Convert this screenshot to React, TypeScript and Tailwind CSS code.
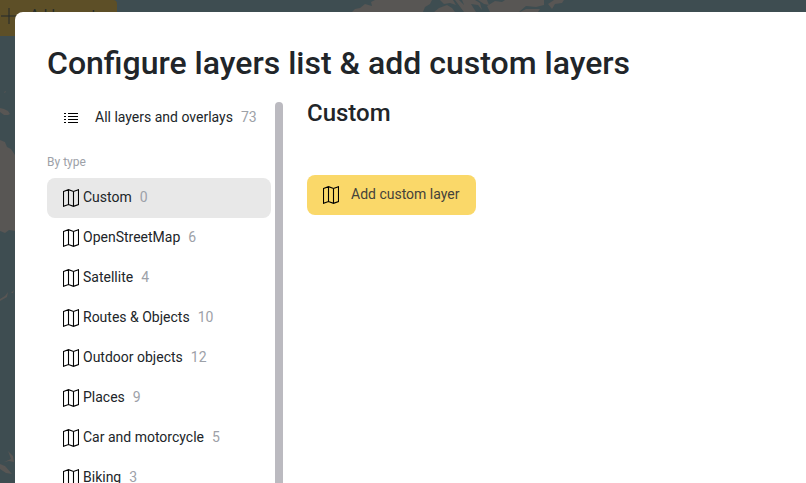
import React from "react";

const layerTypes = [
  { name: "Custom", count: 0 },
  { name: "OpenStreetMap", count: 6 },
  { name: "Satellite", count: 4 },
  { name: "Routes & Objects", count: 10 },
  { name: "Outdoor objects", count: 12 },
  { name: "Places", count: 9 },
  { name: "Car and motorcycle", count: 5 },
  { name: "Biking", count: 3 },
];

function MapIcon() {
  return (
    <svg className="h-[18px] w-4 shrink-0" viewBox="0 0 16 18" fill="none" stroke="#000" strokeWidth="1.1">
      <path d="M.5 2.5 5.5.7l5 1.8 5-1.8v14.8l-5 1.8-5-1.8-5 1.8zM5.5.7v14.8M10.5 2.5v14.8" />
    </svg>
  );
}

function ListIcon() {
  return (
    <svg className="mt-0.5 h-[11px] w-3.5 shrink-0" viewBox="0 0 14 11" fill="#000" shapeRendering="crispEdges">
      {[0, 3, 6, 9].map((y) => (
        <React.Fragment key={y}>
          <rect x="0" y={y} width="2" height="1" />
          <rect x="4" y={y} width="10" height="1" />
        </React.Fragment>
      ))}
    </svg>
  );
}

function Backdrop() {
  return (
    <svg className="absolute inset-0" width="806" height="483" viewBox="0 0 806 483">
      <g fill="#585654">
        <path d="M352 12l3-3 5-1 5-4 7 2-1-4 4-2h57l-2 4-5 3-2 5zM434 12l5-4 8-3 5 3 3 4zM440 0h13l3 5-6-2-6 1zM455 0h4l7 7 3 5h-5zM462 0h13l5 3 2 7-4-5-7-1 5 8h-9zM478 0h9l2 5-5-1zM487 6l8-5 7 1 3-2h39v5l-8 2-10-1-7 6h-29zM520 12l6-3h14l-2 3zM548 4l6-4h10l-2 3-7 1-3 5z" />
        <path d="M0 108l4 1 4 2 2 3-2 1H4l-4-3zM0 140l5 2 2 5 4 2 4 6v76l-6-1-4 3-5-2zM4 92l2-1-1 2zM0 299l5-3 3-4-1 5-7 4zM11 293l3-3-1 3zM8 451l5 5 1 6-5-1-5 1 7-3zM0 464l5 2 7 8-6-1-6-4z" />
      </g>
    </svg>
  );
}

export default function App() {
  return (
    <div className="relative h-[483px] w-[806px] overflow-hidden bg-[#3e4d51] font-['Roboto',sans-serif] text-sm text-[#212529]">
      <Backdrop />
      <div className="relative flex h-9 w-[117px] items-start rounded-br rounded-tr bg-[#5d4f27] text-[#242b2c]">
        <svg className="mt-2 h-4 w-4 shrink-0" viewBox="0 0 16 16" stroke="currentColor">
          <path d="M1 8h15M9 0v16" />
        </svg>
        <span className="ml-3.5 mt-[5px] whitespace-nowrap">Add report</span>
      </div>
      <main className="absolute left-[15px] top-3 flex h-[480px] w-[810px] flex-col rounded-tl-lg bg-white pl-8 pt-8">
        <h1 className="h-[58px] shrink-0 whitespace-nowrap text-[32px] font-medium leading-[38px]">
          Configure layers list &amp; add custom layers
        </h1>
        <div className="flex min-h-0 flex-1 overflow-hidden">
          <nav className="w-56 shrink-0">
            <div className="-mt-[5px] flex h-10 items-center pl-[17px]">
              <ListIcon />
              <span className="ml-[17px] whitespace-nowrap">All layers and overlays</span>
              <span className="ml-2 text-[#9da1a8]">73</span>
            </div>
            <div className="mt-4 h-[25px] text-xs leading-[18px] text-[#9da1a8]">By type</div>
            {layerTypes.map(({ name, count }, index) => (
              <div
                key={name}
                className={`flex h-10 items-center rounded-lg pl-4 ${index === 0 ? "bg-[#e8e8e8]" : ""}`}
              >
                <MapIcon />
                <span className="mb-0.5 ml-1 whitespace-nowrap">{name}</span>
                <span className="mb-0.5 ml-2 text-[#9da1a8]">{count}</span>
              </div>
            ))}
          </nav>
          <div className="ml-1 h-[500px] w-2 shrink-0 rounded-full bg-[#bbbac0]" />
          <section className="ml-6 flex flex-col items-start">
            <h2 className="-mt-[3px] h-[76px] text-2xl font-medium leading-[29px]">Custom</h2>
            <button className="flex h-10 w-[169px] shrink-0 items-center rounded-lg bg-[#fad869] pl-4 text-[#45423a]">
              <MapIcon />
              <span className="mb-0.5 ml-3 whitespace-nowrap">Add custom layer</span>
            </button>
          </section>
        </div>
      </main>
    </div>
  );
}
